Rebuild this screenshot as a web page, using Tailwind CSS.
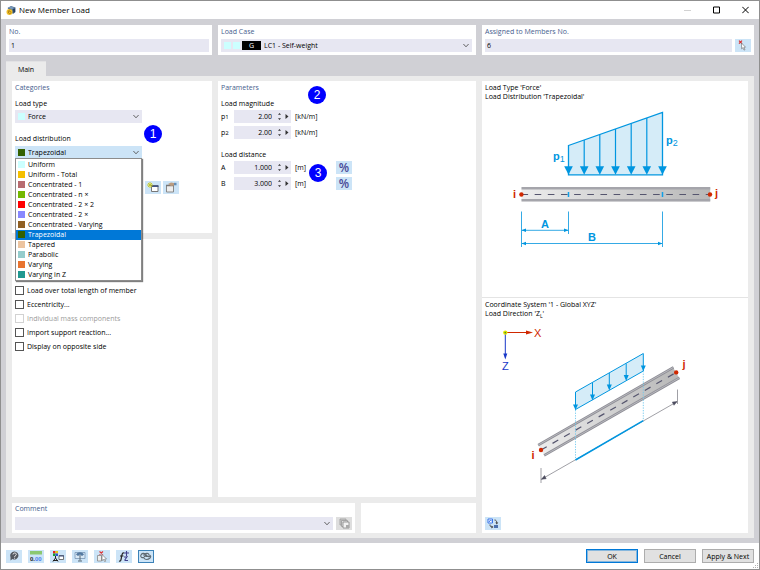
<!DOCTYPE html>
<html lang="en">
<head>
<meta charset="utf-8">
<title>New Member Load</title>
<script src="https://cdn.jsdelivr.net/npm/@tailwindcss/browser@4"></script>
</head>
<body class="font-['Open_Sans','Noto_Sans',sans-serif] text-[7px] leading-[9px] font-medium text-black">
<div class="min-h-screen flex flex-col border border-[#8f8f8f] bg-[#d0d0d5]">

  <!-- Title bar -->
  <header class="h-[18px] bg-white flex items-center pl-[5px] pr-[10px] gap-[3px]">
    <svg class="w-[10px] h-[11px]" viewBox="0 0 20 22"><path d="M3 6 10 2l9 3v9l-5 4z" fill="#4c6d92"/><path d="M4 5l7-2 6 3-6 3z" fill="#7898b8"/><path d="M14 8l4-1v7l-3 2z" fill="#263d5a"/><circle cx="7" cy="14" r="6" fill="#f0c02a"/><path d="M9 9c-4 1-5 4-4 7 1 2 5 2 5-1s-3-3-5-1" fill="none" stroke="#a8780c" stroke-width="1.6"/></svg>
    <h1 class="flex-1 text-[8px] leading-[10px] font-normal text-black">New Member Load</h1>
    <div class="flex items-center gap-[22px] text-black">
      <button aria-label="Minimize" disabled><svg class="w-[7px] h-[8px]" viewBox="0 0 7 8"><path d="M0 4.500h7" stroke="#d2d2d2"/></svg></button>
      <button aria-label="Maximize"><svg class="w-[7px] h-[8px]" viewBox="0 0 7 8"><path d="M.5 1h6v6h-6z" fill="none" stroke="currentColor"/></svg></button>
      <button aria-label="Close"><svg class="w-[7px] h-[8px]" viewBox="0 0 7 8"><path d="M.3.8l6.400 6.400M6.700.8.3 7.200" stroke="currentColor"/></svg></button>
    </div>
  </header>

  <main class="flex-1 flex flex-col px-[5px] pt-[6px] pb-[5px]">
    <!-- Header cards -->
    <div class="grid grid-cols-[206fr_258fr_272fr] gap-[6px]">
      <div class="bg-white h-[30px] px-[3px] pt-[2px] flex flex-col gap-[3px]">
        <label for="no" class="text-[#46608e]">No.</label>
        <input id="no" value="1" class="h-[13px] w-full bg-[#e7e7f2] px-[2px]">
      </div>
      <div class="bg-white h-[30px] px-[3px] pt-[2px] flex flex-col gap-[3px]">
        <label for="lc" class="text-[#46608e]">Load Case</label>
        <div class="h-[13px] mr-[1px] bg-[#e7e7f2] flex items-center gap-[2px] pl-[3px] pr-[3px]">
          <span class="size-[7px] bg-[#ccffff]"></span><span class="size-[7px] bg-[#ccffff]"></span>
          <span class="w-[19px] h-[9px] bg-black text-white text-center">G</span>
          <select id="lc" class="appearance-none flex-1 h-[13px] pl-[1px]"><option>LC1 - Self-weight</option></select>
          <svg class="w-[6px] h-[5px]" viewBox="0 0 6 5"><path d="M.4 1 3 3.800 5.600 1" fill="none" stroke="#555" stroke-width=".9"/></svg>
        </div>
      </div>
      <div class="bg-white h-[30px] px-[3px] pt-[2px] flex flex-col gap-[3px]">
        <label for="members" class="text-[#46608e]">Assigned to Members No.</label>
        <div class="flex gap-[3px]">
          <input id="members" value="6" class="h-[13px] flex-1 bg-[#e7e7f2] px-[2px]">
          <button aria-label="Pick members" class="w-[16px] h-[13px] bg-[#cce4f7] flex items-center justify-center"><svg class="w-[10px] h-[11px]" viewBox="0 0 10 11"><path d="M1 .7l3 3M4 .7l-3 3" stroke="#d93030" stroke-width="1.200"/><path d="M3.500 3l4 4.200-1.700.1 1.200 2.300-1 .5-1.100-2.400-1.300 1.200z" fill="#fff" stroke="#666" stroke-width=".6"/></svg></button>
        </div>
      </div>
    </div>

    <nav class="mt-[6px] flex"><a href="#main" class="bg-[#ebebeb] w-[40px] h-[15px] pt-[3px] text-center border-t border-[#e2e2e4]">Main</a></nav>

    <div id="main" class="flex-1 bg-[#ebebeb] px-[6px] py-[5px] grid grid-cols-[464fr_266fr] gap-[6px]">
      <div class="flex flex-col gap-[6px]">
        <div class="flex-1 grid grid-cols-[200fr_258fr] gap-[6px]">
          <div class="flex flex-col gap-[6px]">
            <!-- Categories -->
            <section class="relative bg-white h-[152px] px-[3px] pt-[2px]">
              <h2 class="text-[#46608e]">Categories</h2>
              <label for="ltype" class="block mt-[7px]">Load type</label>
              <div class="mt-[2px] h-[13px] w-[127px] bg-[#e7e7f2] flex items-center gap-[3px] px-[3px]">
                <span class="size-[7px] bg-[#ccffff]"></span>
                <select id="ltype" class="appearance-none flex-1 h-[13px]"><option>Force</option></select>
                <svg class="w-[6px] h-[5px]" viewBox="0 0 6 5"><path d="M.4 1 3 3.800 5.600 1" fill="none" stroke="#555" stroke-width=".9"/></svg>
              </div>
              <label for="ldist" class="block mt-[11px]">Load distribution</label>
              <div class="relative mt-[3px] h-[13px] w-[127px] bg-[#cce4f7] flex items-center gap-[3px] px-[3px]">
                <span class="size-[7px] bg-[#336000]"></span>
                <select id="ldist" class="appearance-none flex-1 h-[13px]"><option>Trapezoidal</option></select>
                <svg class="w-[6px] h-[5px]" viewBox="0 0 6 5"><path d="M.4 1 3 3.800 5.600 1" fill="none" stroke="#555" stroke-width=".9"/></svg>
                <!-- Opened list -->
                <ul role="listbox" aria-label="Load distribution" class="absolute z-10 left-0 top-[12px] w-full h-[123px] bg-white border border-[#8c8c8c] shadow-[1px_1px_1px_#00000080] flex flex-col">
                  <li role="option" class="flex-1 flex items-center gap-[3px] pl-[2px]"><span class="size-[7px] bg-[#ccffff]"></span>Uniform</li>
                  <li role="option" class="flex-1 flex items-center gap-[3px] pl-[2px]"><span class="size-[7px] bg-[#f5c000]"></span>Uniform - Total</li>
                  <li role="option" class="flex-1 flex items-center gap-[3px] pl-[2px]"><span class="size-[7px] bg-[#b86c70]"></span>Concentrated - 1</li>
                  <li role="option" class="flex-1 flex items-center gap-[3px] pl-[2px]"><span class="size-[7px] bg-[#74b800]"></span>Concentrated - n ×</li>
                  <li role="option" class="flex-1 flex items-center gap-[3px] pl-[2px]"><span class="size-[7px] bg-[#ff0000]"></span>Concentrated - 2 × 2</li>
                  <li role="option" class="flex-1 flex items-center gap-[3px] pl-[2px]"><span class="size-[7px] bg-[#8888ff]"></span>Concentrated - 2 ×</li>
                  <li role="option" class="flex-1 flex items-center gap-[3px] pl-[2px]"><span class="size-[7px] bg-[#906024]"></span>Concentrated - Varying</li>
                  <li role="option" aria-selected="true" class="flex-1 flex items-center gap-[3px] pl-[2px] bg-[#0078d7] text-white"><span class="size-[7px] bg-[#336000]"></span>Trapezoidal</li>
                  <li role="option" class="flex-1 flex items-center gap-[3px] pl-[2px]"><span class="size-[7px] bg-[#ecc4a0]"></span>Tapered</li>
                  <li role="option" class="flex-1 flex items-center gap-[3px] pl-[2px]"><span class="size-[7px] bg-[#94cccc]"></span>Parabolic</li>
                  <li role="option" class="flex-1 flex items-center gap-[3px] pl-[2px]"><span class="size-[7px] bg-[#e87430]"></span>Varying</li>
                  <li role="option" class="flex-1 flex items-center gap-[3px] pl-[2px]"><span class="size-[7px] bg-[#209890]"></span>Varying in Z</li>
                </ul>
              </div>
              <div class="mt-[22px] ml-[130px] flex gap-[2px]">
                <button aria-label="New" class="w-[16px] h-[13px] bg-[#cce4f7] flex items-center justify-center"><svg class="w-[12px] h-[11px]" viewBox="0 0 12 11"><path d="M4.500 3.500h6.500v6H4.500z" fill="#fff" stroke="#777"/><path d="M4 4.200h7.500" stroke="#394f80" stroke-width="1.500"/><path d="M3 0v6M0 3h6M1 1l4 4M5 1 1 5" stroke="#c8c818" stroke-width=".9"/></svg></button>
                <button aria-label="Edit" class="w-[16px] h-[13px] bg-[#cce4f7] flex items-center justify-center"><svg class="w-[12px] h-[11px]" viewBox="0 0 12 11"><path d="M1.500 3.500h7v6.500h-7z" fill="#eee" stroke="#888"/><path d="M1 3.500h8" stroke="#777" stroke-width="1.500"/><path d="M3 2l3-1.500L9 1v2.500L6 4z" fill="#bb9c80"/><path d="M9 .8h2.500v2.500H9z" fill="#658eb5"/></svg></button>
              </div>
              <span class="absolute left-[132px] top-[44px] size-[18px] rounded-full bg-[#0000ff] text-white text-center font-['Liberation_Sans',Arial,sans-serif] font-normal text-[12px] leading-[18px]">1</span>
            </section>
            <!-- Options -->
            <section class="bg-white flex-1 px-[3px] pt-[47px]">
              <div class="flex flex-col gap-[5px]">
                <label class="flex items-center gap-[3px] h-[9px]"><input type="checkbox" class="appearance-none size-[9px] border border-[#555] bg-white">Load over total length of member</label>
                <label class="flex items-center gap-[3px] h-[9px]"><input type="checkbox" class="appearance-none size-[9px] border border-[#555] bg-white">Eccentricity...</label>
                <label class="flex items-center gap-[3px] h-[9px] text-[#9b9b9b]"><input type="checkbox" disabled class="appearance-none size-[9px] border border-[#d2d2d2] bg-white">Individual mass components</label>
                <label class="flex items-center gap-[3px] h-[9px]"><input type="checkbox" class="appearance-none size-[9px] border border-[#555] bg-white">Import support reaction...</label>
                <label class="flex items-center gap-[3px] h-[9px]"><input type="checkbox" class="appearance-none size-[9px] border border-[#555] bg-white">Display on opposite side</label>
              </div>
            </section>
          </div>

          <!-- Parameters -->
          <section class="relative bg-white px-[3px] pt-[2px]">
            <h2 class="text-[#46608e]">Parameters</h2>
            <h3 class="mt-[7px]">Load magnitude</h3>
            <div class="mt-[2px] flex flex-col gap-[3px]">
              <div class="flex items-center h-[13px]">
                <label for="p1" class="w-[13px]">p<span class="text-[6px]">1</span></label>
                <div class="w-[57px] h-[13px] bg-[#e7e7f2] flex items-center pr-[2px]"><input id="p1" value="2.00" class="w-[38px] text-right"><svg class="ml-auto w-[12px] h-[9px]" viewBox="0 0 12 9"><path d="M1 2.800 2.500 1 4 2.800zM1 6.200 2.500 8 4 6.200zM8.500 2l3 2.500-3 2.500z" fill="#333"/></svg></div>
                <span class="ml-[4px]">[kN/m]</span>
              </div>
              <div class="flex items-center h-[13px]">
                <label for="p2" class="w-[13px]">p<span class="text-[6px]">2</span></label>
                <div class="w-[57px] h-[13px] bg-[#e7e7f2] flex items-center pr-[2px]"><input id="p2" value="2.00" class="w-[38px] text-right"><svg class="ml-auto w-[12px] h-[9px]" viewBox="0 0 12 9"><path d="M1 2.800 2.500 1 4 2.800zM1 6.200 2.500 8 4 6.200zM8.500 2l3 2.500-3 2.500z" fill="#333"/></svg></div>
                <span class="ml-[4px]">[kN/m]</span>
              </div>
            </div>
            <h3 class="mt-[11px]">Load distance</h3>
            <div class="mt-[2px] flex flex-col gap-[3px]">
              <div class="flex items-center h-[13px]">
                <label for="da" class="w-[13px]">A</label>
                <div class="w-[57px] h-[13px] bg-[#e7e7f2] flex items-center pr-[2px]"><input id="da" value="1.000" class="w-[38px] text-right"><svg class="ml-auto w-[12px] h-[9px]" viewBox="0 0 12 9"><path d="M1 2.800 2.500 1 4 2.800zM1 6.200 2.500 8 4 6.200zM8.500 2l3 2.500-3 2.500z" fill="#333"/></svg></div>
                <span class="ml-[4px] w-[41px]">[m]</span>
                <button class="w-[16px] h-[13px] bg-[#cce4f7] text-[#4a4a98] text-[12px] leading-[12px] font-semibold">%</button>
              </div>
              <div class="flex items-center h-[13px]">
                <label for="db" class="w-[13px]">B</label>
                <div class="w-[57px] h-[13px] bg-[#e7e7f2] flex items-center pr-[2px]"><input id="db" value="3.000" class="w-[38px] text-right"><svg class="ml-auto w-[12px] h-[9px]" viewBox="0 0 12 9"><path d="M1 2.800 2.500 1 4 2.800zM1 6.200 2.500 8 4 6.200zM8.500 2l3 2.500-3 2.500z" fill="#333"/></svg></div>
                <span class="ml-[4px] w-[41px]">[m]</span>
                <button class="w-[16px] h-[13px] bg-[#cce4f7] text-[#4a4a98] text-[12px] leading-[12px] font-semibold">%</button>
              </div>
            </div>
            <span class="absolute left-[90px] top-[5px] size-[18px] rounded-full bg-[#0000ff] text-white text-center font-['Liberation_Sans',Arial,sans-serif] font-normal text-[12px] leading-[18px]">2</span>
            <span class="absolute left-[91px] top-[83px] size-[18px] rounded-full bg-[#0000ff] text-white text-center font-['Liberation_Sans',Arial,sans-serif] font-normal text-[12px] leading-[18px]">3</span>
          </section>
        </div>

        <!-- Comment -->
        <div class="grid grid-cols-[343fr_115fr] gap-[6px] h-[30px]">
          <section class="bg-white px-[3px] pt-[1px] flex flex-col gap-[4px]">
            <label for="comment" class="text-[#46608e]">Comment</label>
            <div class="flex gap-[3px]">
              <div class="flex-1 h-[13px] bg-[#e7e7f2] flex items-center pr-[3px]">
                <select id="comment" class="appearance-none flex-1 h-[13px]"><option></option></select>
                <svg class="w-[6px] h-[5px]" viewBox="0 0 6 5"><path d="M.4 1 3 3.800 5.600 1" fill="none" stroke="#555" stroke-width=".9"/></svg>
              </div>
              <button aria-label="Copy comment" disabled class="w-[16px] h-[13px] bg-[#dedede] flex items-center justify-center"><svg class="w-[11px] h-[11px]" viewBox="0 0 11 11"><path d="M1 1h6v6H1z" fill="#ccc" stroke="#999" stroke-width=".8"/><path d="M2.500 2.500h6v6h-6z" fill="#ddd" stroke="#999" stroke-width=".8"/><path d="M4 4h6v6H4z" fill="#f2f2f2" stroke="#888" stroke-width=".8"/><path d="M7 7h3v3H7z" fill="#aaa"/></svg></button>
            </div>
          </section>
          <section class="bg-white"></section>
        </div>
      </div>

      <!-- Preview -->
      <aside class="bg-white grid grid-rows-[216fr_236fr]">
        <div class="pt-[2px]">
          <p class="px-[3px]">Load Type 'Force'<br>Load Distribution 'Trapezoidal'</p>
          <svg class="w-full" viewBox="482 101 266 160" role="img" aria-label="Trapezoidal load on member">
            <defs>
              <linearGradient id="steel"><stop offset="0" stop-color="#ececec"/><stop offset="1" stop-color="#b8b8b8"/></linearGradient>
              <path id="head" d="M-4.300-8.500h8.600L0 0z" fill="#0096e0"/>
              <path id="dim" d="M0 0l4.500-1.800v3.600z" fill="#0096e0"/>
            </defs>
            <path d="M568.500 145.500 662.500 112.500V174.800H568.500z" fill="#d5ecf8" stroke="#0096e0" stroke-width="1.300"/>
            <path d="M584.200 140v30M599.800 134.500v36M615.500 129v41M631.200 123.500v47M646.800 118v52" stroke="#0096e0" stroke-width="1.200"/>
            <use href="#head" x="568.500" y="174.800"/><use href="#head" x="584.200" y="174.800"/><use href="#head" x="599.800" y="174.800"/><use href="#head" x="615.500" y="174.800"/><use href="#head" x="631.200" y="174.800"/><use href="#head" x="646.800" y="174.800"/><use href="#head" x="662.500" y="174.800"/>
            <path d="M521.500 187.500h188.700v13.800H521.500z" fill="url(#steel)"/>
            <path d="M521.500 188.300h188.700M521.500 200.300h188.700" stroke="#a5a5ab" stroke-width="2.500"/>
            <path d="M521.500 194.500h188.700" stroke="#55556e" stroke-width="1.200" stroke-dasharray="6.600 6.560"/>
            <path d="M568.500 192v5M662.500 192v5" stroke="#10a0e8" stroke-width="1.500"/>
            <circle cx="521.400" cy="194.500" r="2.200" fill="#d02800"/><circle cx="710" cy="194.500" r="2.200" fill="#d02800"/>
            <path d="M521.500 211.500v35.500M568.500 211.500v22.500M662.500 211.500v35.500M522 230.300h46M522 243.500h140" stroke="#35aae5" stroke-width="1"/>
            <use href="#dim" x="521.500" y="230.300"/><use href="#dim" transform="translate(568.500 230.300) rotate(180)"/>
            <use href="#dim" x="521.500" y="243.500"/><use href="#dim" transform="translate(662.500 243.500) rotate(180)"/>
            <g class="font-['Liberation_Sans',Arial,sans-serif] font-bold text-[11px]" fill="#0096e0">
              <text x="553" y="159.500">p<tspan class="text-[9px] font-normal" dy="2">1</tspan></text>
              <text x="666" y="144">p<tspan class="text-[9px] font-normal" dy="2">2</tspan></text>
              <text x="545" y="228" text-anchor="middle">A</text><text x="592" y="241" text-anchor="middle">B</text>
              <g fill="#d02800"><text x="513" y="198">i</text><text x="715" y="197">j</text></g>
            </g>
          </svg>
        </div>
        <div class="border-t border-[#e4e4e4] pt-[2px] flex flex-col">
          <p class="px-[3px]">Coordinate System '1 - Global XYZ'<br>Load Direction 'Z<span class="text-[5px] leading-[0] align-sub">L</span>'</p>
          <svg class="w-full" viewBox="482 319 266 176" role="img" aria-label="Load direction in global axes">
            <path d="M506 333.500h22" stroke="#d02800"/><path d="M526 331.500l7 2-7 2z" fill="#d02800"/>
            <path d="M505.300 334v22" stroke="#1838c8"/><path d="M503.300 354.500h4l-2 6z" fill="#1838c8"/>
            <circle cx="505.300" cy="333.600" r="2.200" fill="#e8e400"/><circle cx="505.300" cy="333.600" r=".9" fill="#4b9920"/>
            <g transform="translate(541 451) rotate(-29.860)">
              <path d="M0-5.500h155.700v11H0z" fill="url(#steel)"/>
              <path d="M0-5.700h156M0 6.300h156" stroke="#8f8f96" stroke-width="2.600"/>
              <path d="M0-5.700h156M0 6.300h156" stroke="#bcbcc2" stroke-width=".8"/>
              <path d="M0 0h156" stroke="#55556e" stroke-width="1.200" stroke-dasharray="6.600 6.700"/>
            </g>
            <path d="M575.500 393 643.300 354.500v17.500L575.500 410.500z" fill="#d5ecf8" stroke="#0096e0"/>
            <path d="M592.500 383.500v14M609.300 374v14M626.200 364.500v14" stroke="#0096e0"/>
            <g fill="#0096e0"><path d="M573 405.500h5l-2.500 5.500zM590 395.500h5l-2.500 6zM606.800 385.500h5l-2.500 6zM623.700 376h5l-2.500 6zM640.800 366.500h5l-2.500 5.500z"/></g>
            <path d="M575.500 411v50M643.300 372v49" stroke="#70c8ee" stroke-width=".9" stroke-dasharray="1.300 1.300"/>
            <path d="M541 480.500 677.300 402.500M541 469v15M677.500 390.500v14.500" stroke="#95959c" stroke-width=".9" fill="none"/>
            <path d="M541.500 480.300l3-3.800 1.700 3.200zM677 402.600l-4.700.5 1.700 3.200z" fill="#4c4c5e" stroke="#4c4c5e" stroke-width=".5"/>
            <path d="M575.500 461 643.300 421.700" stroke="#0096e0" stroke-width="1.500"/>
            <circle cx="541" cy="451" r="2.200" fill="#d02800"/><circle cx="676.200" cy="373.400" r="2.200" fill="#d02800"/>
            <g class="font-['Liberation_Sans',Arial,sans-serif] font-normal text-[11px]" fill="#d02800">
              <text x="534" y="337.500">X</text><text x="502" y="371" fill="#1838c8">Z</text>
              <text x="531.500" y="460" class="font-bold">i</text><text x="682.500" y="369" class="font-bold">j</text>
            </g>
          </svg>
          <div class="mt-auto px-[3px] pb-[3px]">
            <button aria-label="Switch view" class="w-[16px] h-[13px] bg-[#cce4f7] flex items-center justify-center"><svg class="w-[12px] h-[11px]" viewBox="0 0 12 11"><path d="M1 1h4.500v4H1z" fill="#fff" stroke="#3975e8"/><path d="M2 4l1.500-2L5 3.500" stroke="#3975e8" fill="none"/><path d="M7 7h4v3H7z" fill="#4b70ad"/><path d="M7.500 2c1.500 0 2.300 1 2.300 3M3 6.500c0 1.500.5 2.500 2 2.500" stroke="#444" fill="none"/><path d="M8.300 4.500h3L9.800 6.500zM4.500 7.500l2 1.500-2 1.500z" fill="#444"/></svg></button>
          </div>
        </div>
      </aside>
    </div>
  </main>

  <!-- Dialog buttons -->
  <footer class="relative bg-white h-[26px] px-[5px] flex items-center justify-between">
    <div class="flex gap-[6px]">
      <button aria-label="Help" class="w-[16px] h-[13px] bg-[#cce4f7] flex items-center justify-center"><svg class="w-[10px] h-[10px]" viewBox="0 0 10 10"><path d="M5.500.5a4 4 0 1 1-2 7.500L1.500 9.500V6A4 4 0 0 1 5.500.5z" fill="#555b62"/><path d="M4 3.500c0-2 3.300-2 3.300 0C7.300 4.700 5.600 4.500 5.600 6M5.600 6.700v1" fill="none" stroke="#fff" stroke-width=".9"/></svg></button>
      <button aria-label="Units" class="w-[16px] h-[13px] bg-[#cce4f7] flex items-center justify-center"><svg class="w-[12px] h-[11px]" viewBox="0 0 12 11"><path d="M0 0h12v3.500H0z" fill="#8cc870"/><text x="0" y="9.500" font-size="6" font-weight="bold" fill="#222" font-family="Liberation Sans, sans-serif">0.<tspan fill="#4b7fe8">00</tspan></text></svg></button>
      <button aria-label="Display properties" class="w-[16px] h-[13px] bg-[#cce4f7] flex items-center justify-center"><svg class="w-[12px] h-[11px]" viewBox="0 0 12 11"><path d="M1 0h2.500v2.500H1z" fill="#e82020"/><path d="M3.500 0H6v2.500H3.500z" fill="#e8cc10"/><path d="M1 2.500h2.500V5H1z" fill="#18a030"/><path d="M3.500 2.500H6V5H3.500z" fill="#3050d0"/><path d="M3.500 5v2L1 10.500M3.500 7 6 10.500M1 9.500h5" stroke="#222" fill="none"/><path d="M7 4.500h4.500v4H7z" fill="#fff" stroke="#555" stroke-width=".8"/><path d="M7 5h5" stroke="#394f80"/></svg></button>
      <button aria-label="View" class="w-[16px] h-[13px] bg-[#cce4f7] flex items-center justify-center"><svg class="w-[12px] h-[11px]" viewBox="0 0 12 11"><path d="M1 1.500h10v6H1z" fill="#d8e8f5" stroke="#7995b5" stroke-width=".8"/><path d="M2 3.500C4 .5 8 .5 10 3.500L8 5 6 3.500 4 5z" fill="#5479a0"/><path d="M6 4v5.500M4 10h4" stroke="#586875"/></svg></button>
      <button aria-label="Clear selection" class="w-[16px] h-[13px] bg-[#cce4f7] flex items-center justify-center"><svg class="w-[12px] h-[11px]" viewBox="0 0 12 11"><path d="M3.500.5l3.500 3M7 .5l-3.500 3" stroke="#e03030" stroke-width="1.200"/><path d="M1.500 4.500h4v5.500h-4z" fill="#eee" stroke="#888" stroke-width=".8"/><path d="M6 3.500l4.500 4.500-2 .2 1.200 2-1 .5-1.200-2.200L6 9.500z" fill="#fff" stroke="#666" stroke-width=".6"/></svg></button>
      <button aria-label="Formula" class="w-[16px] h-[13px] bg-[#cce4f7] flex items-center justify-center"><svg class="w-[12px] h-[11px]" viewBox="0 0 12 11"><path d="M1 10c2 .5 2-1 2.500-4S4.500 1.500 6 2M2 5h3.500" fill="none" stroke="#222" stroke-width="1.200"/><path d="M6 2h5M8.500 0v5M6.500 9.500 9.500 5M6 6h3M7 9.500h3" stroke="#40408c" fill="none" stroke-width="1.100"/></svg></button>
      <button aria-label="Graphics" aria-pressed="true" class="w-[16px] h-[13px] bg-[#cce4f7] border border-[#3c82b8] flex items-center justify-center"><svg class="w-[12px] h-[9px]" viewBox="0 0 12 9"><path d="M1 3c1-2 3-2 4-1 1-1 4-1 4 1 2 0 2 2 1 3M1 3c-1 2 1 3 3 2.500M3 3h4M4 5c2-2 4-1 5 0M4 6c1 2 4 2 6 0M6 4.500h4" fill="none" stroke="#606a72" stroke-width="1.100"/></svg></button>
    </div>
    <div class="flex gap-[6px]">
      <button class="w-[52px] h-[14px] bg-[#e1e1e1] border border-[#0078d7] outline outline-[#0078d7]/40 -outline-offset-2">OK</button>
      <button class="w-[52px] h-[14px] bg-[#e1e1e1] border border-[#adadad]">Cancel</button>
      <button class="w-[52px] h-[14px] bg-[#e1e1e1] border border-[#adadad] whitespace-nowrap">Apply &amp; Next</button>
    </div>
    <svg class="absolute right-0 bottom-0 size-[7px]" viewBox="0 0 7 7"><path d="M5 1h1v1H5zM3 3h1v1H3zM5 3h1v1H5zM1 5h1v1H1zM3 5h1v1H3zM5 5h1v1H5z" fill="#b0b0b0"/></svg>
  </footer>
</div>
</body>
</html>
